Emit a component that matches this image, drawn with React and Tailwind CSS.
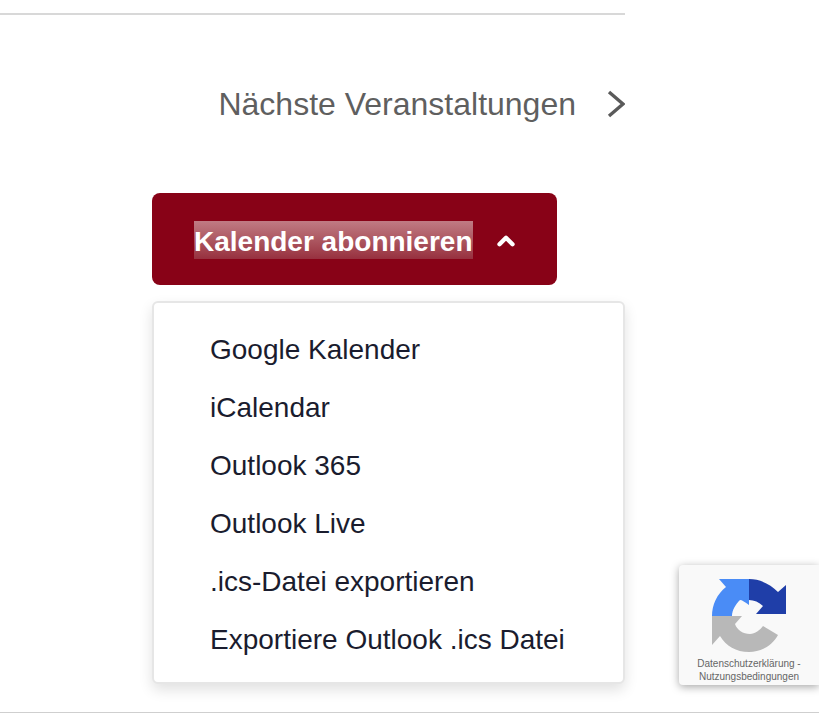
import { ChevronUp } from 'lucide-react'

const calendarLinks = [
  'Google Kalender',
  'iCalendar',
  'Outlook 365',
  'Outlook Live',
  '.ics-Datei exportieren',
  'Exportiere Outlook .ics Datei',
]

function RecaptchaLogo() {
  return (
    <svg width="74" height="74" viewBox="0 0 74 74" className="block">
      {/* grey arrow, bottom left */}
      <path d="M0 38H30L23 46C25 52 31 56 38 56C43 56 48 52 51 48L66 57C60 68 49 74 37 74C24 74 14 68 8 58L0 67Z" fill="#b8b8b8" />
      {/* light blue arrow, top left */}
      <path d="M0 38C0 27 5 16 14 9L7 1H37V27C33 24 30 22 28 22C24 26 20 32 20 38Z" fill="#4a8cf6" />
      {/* dark blue arrow, top right */}
      <path d="M37 1C48 1 58 6 66 14L74 7V36H44L51 28C47 24 42 22 37 22Z" fill="#1f3ea8" />
    </svg>
  )
}

export default function App() {
  return (
    <div className="relative h-[713px] w-[819px] overflow-hidden bg-white font-['Liberation_Sans',Arial,sans-serif]">
      <div className="flex h-full w-[625px] flex-col pt-[13px]">
        <div className="h-0.5 bg-[#d8d8d8]" />

        <div className="mt-[71px] flex h-9 items-center justify-end text-[#5f5f5f]">
          <span className="text-[32px] leading-9">Nächste Veranstaltungen</span>
          <svg width="18" height="28" viewBox="0 0 18 28" className="ml-[31px]" fill="none" stroke="#5a5a5a" strokeWidth="3.4">
            <path d="M2 2L16 14L2 26" />
          </svg>
        </div>

        <button className="mt-[71px] ml-[152px] flex h-[92px] w-[405px] items-center rounded-lg bg-[#880217] pl-[42px] text-white">
          <span className="mt-[2px] inline-block h-[38px] bg-gradient-to-b from-[#c07b84] to-[#97303f] text-[28px] leading-[41px] font-bold">
            Kalender abonnieren
          </span>
          <ChevronUp size={26} strokeWidth={4} className="mt-1 ml-5" />
        </button>

        <div className="mt-[16px] ml-[152px] flex h-[383px] w-[473px] flex-col rounded-md border-2 border-[#e6e6e6] bg-white px-[56px] pt-[18px] text-[#1a1c2e] shadow-[0_6px_14px_rgba(0,0,0,0.12)]">
          {calendarLinks.map(label => (
            <div key={label} className="h-[58px] text-[28px] leading-[58px] whitespace-nowrap">
              {label}
            </div>
          ))}
        </div>
      </div>

      <div className="absolute right-0 bottom-0 left-0 h-px bg-[#cfcfcf]" />

      {/* reCAPTCHA badge */}
      <div className="absolute top-[565px] left-[679px] flex h-[120px] w-[140px] flex-col items-center rounded-l bg-[#f9f9f9] pt-[13px] shadow-[0_2px_8px_rgba(0,0,0,0.35)]">
        <RecaptchaLogo />
        <div className="mt-[5px] text-center text-[10px] leading-[13px] text-[#666]">
          Datenschutzerklärung -<br />Nutzungsbedingungen
        </div>
      </div>
    </div>
  )
}
